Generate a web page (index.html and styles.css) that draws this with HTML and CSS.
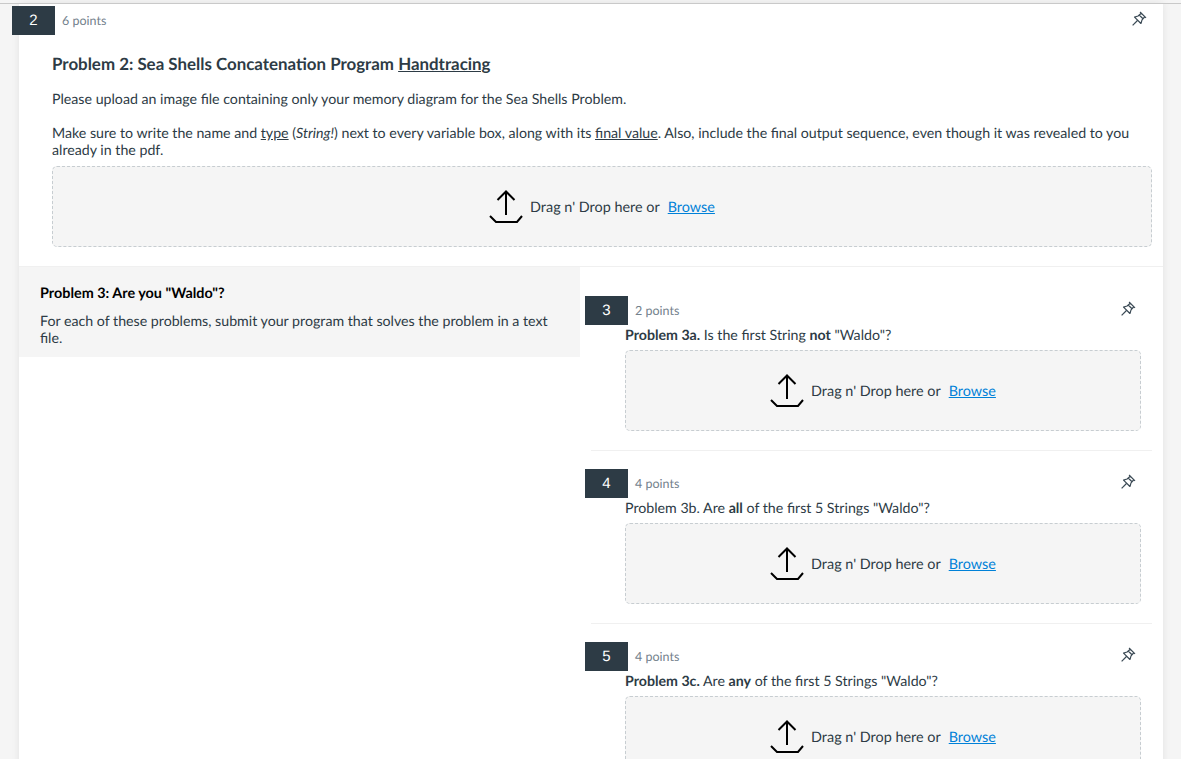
FILE: index.html
```html
<!DOCTYPE html>
<html lang="en">

<head>
    <meta charset="UTF-8">
    <title>Quiz</title>
    <link rel="stylesheet" href="styles.css">
</head>

<body>
    <svg class="icon-defs" width="0" height="0">
        <symbol id="pin" viewBox="0 0 16 16" overflow="visible">
            <g transform="rotate(45 8 8)" fill="none" stroke="#3b4a55" stroke-width="1.200" stroke-linejoin="round">
                <path d="M3.800 2.300h8.400M5.500 2.300L5.200 6.500 3.500 9.800h9L10.800 6.500 10.500 2.300M5.300 5h5.400"/>
                <path d="M8 9.800V17"/>
            </g>
        </symbol>
        <symbol id="upload" viewBox="0 0 34 34">
            <path d="M17 1v24M8.500 10L17 1.500 25.500 10M1 26l6 6h21l5-6" fill="none" stroke="#000" stroke-width="2"/>
        </symbol>
    </svg>

    <main class="page">
        <section class="question">
            <div class="q-head">
                <span class="q-num">2</span>
                <span class="q-points">6 points</span>
                <svg class="pin"><use href="#pin"/></svg>
            </div>
            <div class="q-body">
                <h2>Problem 2: Sea Shells Concatenation Program <u>Handtracing</u></h2>
                <p class="intro">Please upload an image file containing only your memory diagram for the Sea Shells Problem.</p>
                <p>Make sure to write the name and <u>type</u> (<em>String!</em>) next to every variable box, along with its <u>final value</u>. Also, include the final output sequence, even though it was revealed to you already in the pdf.</p>
                <div class="drop">
                    <svg class="upload"><use href="#upload"/></svg>
                    <span>Drag n' Drop here or</span>
                    <a href="#">Browse</a>
                </div>
            </div>
        </section>

        <section class="split">
            <div class="group-info">
                <h3>Problem 3: Are you "Waldo"?</h3>
                <p>For each of these problems, submit your program that solves the problem in a text file.</p>
            </div>
            <div class="group-questions">
                <div class="sub-question">
                    <div class="q-head">
                        <span class="q-num">3</span>
                        <span class="q-points">2 points</span>
                        <svg class="pin"><use href="#pin"/></svg>
                    </div>
                    <div class="sub-body">
                        <p><strong>Problem 3a.</strong> Is the first String <strong>not</strong> "Waldo"?</p>
                        <div class="drop">
                            <svg class="upload"><use href="#upload"/></svg>
                            <span>Drag n' Drop here or</span>
                            <a href="#">Browse</a>
                        </div>
                    </div>
                </div>
                <div class="sub-question">
                    <div class="q-head">
                        <span class="q-num">4</span>
                        <span class="q-points">4 points</span>
                        <svg class="pin"><use href="#pin"/></svg>
                    </div>
                    <div class="sub-body">
                        <p>Problem 3b. Are <strong>all</strong> of the first 5 Strings "Waldo"?</p>
                        <div class="drop">
                            <svg class="upload"><use href="#upload"/></svg>
                            <span>Drag n' Drop here or</span>
                            <a href="#">Browse</a>
                        </div>
                    </div>
                </div>
                <div class="sub-question">
                    <div class="q-head">
                        <span class="q-num">5</span>
                        <span class="q-points">4 points</span>
                        <svg class="pin"><use href="#pin"/></svg>
                    </div>
                    <div class="sub-body">
                        <p><strong>Problem 3c.</strong> Are <strong>any</strong> of the first 5 Strings "Waldo"?</p>
                        <div class="drop">
                            <svg class="upload"><use href="#upload"/></svg>
                            <span>Drag n' Drop here or</span>
                            <a href="#">Browse</a>
                        </div>
                    </div>
                </div>
            </div>
        </section>
    </main>
</body>

</html>
```

FILE: styles.css
```css
* {
    margin: 0;
    padding: 0;
    box-sizing: border-box;
}

html,
body {
    height: 100%;
    overflow: hidden;
}

body {
    background-color: #f5f5f5;
    font-family: Lato, "Open Sans", sans-serif;
    font-size: 14.2px;
    line-height: 17px;
    color: #2d3b45;
    padding-top: 3px;
    text-rendering: geometricPrecision;
}

.icon-defs {
    position: absolute;
}

.page {
    width: 1144px;
    margin-left: 19px;
    height: 800px;
    background-color: white;
    border-top: 1px solid #c9c9c9;
    box-shadow: 0 0 8px rgba(0, 0, 0, 0.08);
    position: relative;
}

/* the top line runs across the whole window */
.page::before {
    content: "";
    position: absolute;
    top: -1px;
    left: -19px;
    width: 1181px;
    height: 1px;
    background-color: #c9c9c9;
}

.q-head {
    display: flex;
    align-items: center;
    height: 29px;
}

.q-num {
    width: 43px;
    height: 29px;
    background-color: #2d3b45;
    color: white;
    font-family: "Liberation Sans", sans-serif;
    font-size: 15px;
    line-height: 29px;
    text-align: center;
    flex-shrink: 0;
}

.q-points {
    margin-left: 7px;
    font-size: 12.5px;
    color: #73818c;
}

.pin {
    width: 16px;
    height: 16px;
    margin-left: auto;
    margin-bottom: 3px;
}

.question .q-head {
    margin: 2px 0 0 -7px;
    padding-right: 16px;
}

.q-body {
    padding: 19px 11px 19px 33px;
}

h2 {
    font-size: 16.9px;
    line-height: 20px;
    font-weight: 700;
    margin-bottom: 17px;
}

.intro {
    margin-bottom: 17px;
}

.drop {
    height: 81px;
    margin-top: 7px;
    background-color: #f5f5f5;
    border: 1px dashed #c7cdd1;
    border-radius: 5px;
    display: flex;
    justify-content: center;
    align-items: center;
    font-size: 14.4px;
}

.drop span,
.drop a {
    margin-top: 2px;
}

.upload {
    width: 34px;
    height: 34px;
    margin-right: 7px;
}

.drop a {
    color: #0081d8;
    margin-left: 8px;
}

.split {
    display: flex;
    border-top: 1px solid #f0f0f0;
}

.group-info {
    width: 561px;
    height: 90px;
    background-color: #f5f5f5;
    padding: 18px 21px 0;
}

.group-info h3 {
    font-size: 14.4px;
    line-height: 17px;
    font-weight: 700;
    color: #000;
    margin-bottom: 11px;
}

.group-questions {
    flex: 1;
    padding-top: 29px;
}

.sub-question {
    margin-left: 11px;
    margin-right: 11px;
    padding-bottom: 19px;
    border-bottom: 1px solid #f0f0f0;
    margin-bottom: 18px;
}

.sub-question .q-head {
    margin-left: -6px;
    padding-right: 16px;
}

.sub-body {
    padding: 1px 11px 0 34px;
}

.sub-body p {
    line-height: 19px;
}

.sub-body .drop {
    margin-top: 5px;
}
```
